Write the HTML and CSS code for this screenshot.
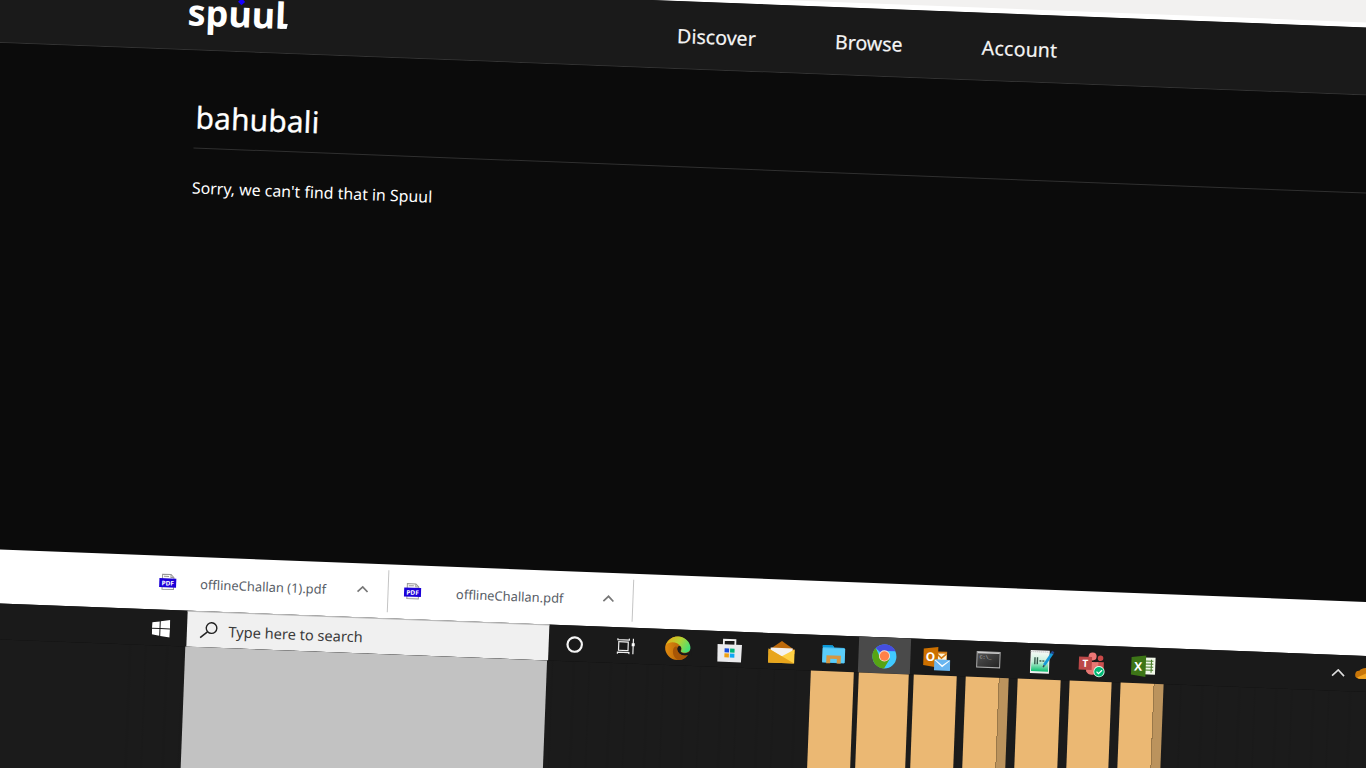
FILE: index.html
```
<!DOCTYPE html>
<html lang="en">
<head>
<meta charset="utf-8">
<title>Spuul</title>
<link rel="stylesheet" href="styles.css">
</head>
<body>
<div class="screen">
  <div class="browser-edge"></div>
  <header class="header">
    <div class="logo">spuul<span class="logo-dot"></span><span class="logo-foot"></span></div>
    <nav class="nav"><a class="discover">Discover</a><a class="browse">Browse</a><a class="account">Account</a></nav>
  </header>
  <main class="content">
    <h1 class="title">bahubali</h1>
    <p class="message">Sorry, we can't find that in Spuul</p>
  </main>
  <section class="downloads">
    <div class="download">
      <svg class="pdf" viewBox="0 0 18 18"><path d="M3.500 7V1.500H12L15 4.500V16.500H3.500Z" fill="#f8f8f8" stroke="#999"/><path d="M12 1.500V4.500H15M5 3.500H10" fill="none" stroke="#999"/><rect x=".5" y="5.500" width="17" height="9" fill="#1b00d8"/><text x="9" y="12.600" text-anchor="middle" class="pdf-text">PDF</text></svg>
      <span class="file">offlineChallan (1).pdf</span>
      <svg class="caret" viewBox="0 0 12 8"><path d="M1 6.500L6 1.500L11 6.500" fill="none" stroke="#777" stroke-width="1.700"/></svg>
    </div>
    <div class="download second">
      <svg class="pdf" viewBox="0 0 18 18"><path d="M3.500 7V1.500H12L15 4.500V16.500H3.500Z" fill="#f8f8f8" stroke="#999"/><path d="M12 1.500V4.500H15M5 3.500H10" fill="none" stroke="#999"/><rect x=".5" y="5.500" width="17" height="9" fill="#1b00d8"/><text x="9" y="12.600" text-anchor="middle" class="pdf-text">PDF</text></svg>
      <span class="file">offlineChallan.pdf</span>
      <svg class="caret" viewBox="0 0 12 8"><path d="M1 6.500L6 1.500L11 6.500" fill="none" stroke="#777" stroke-width="1.700"/></svg>
    </div>
  </section>
  <section class="taskbar">
    <div class="start"><svg class="win" viewBox="0 0 18 18"><path d="M0 3L7.500 1.800V8.500H0ZM8.500 1.600L18 0V8.500H8.500ZM0 9.500H7.500V16.200L0 15ZM8.500 9.500H18V17.500L8.500 16.300Z" fill="#fff"/></svg></div>
    <div class="search"><svg class="lens" viewBox="0 0 20 20"><circle cx="12.500" cy="7.500" r="5.300" fill="none" stroke="#222" stroke-width="1.400"/><path d="M8.500 11.500L1.500 17.500" stroke="#222" stroke-width="1.500"/></svg><span>Type here to search</span></div>
    <div class="apps">
      <div class="app"><svg viewBox="0 0 28 28"><circle cx="14" cy="14" r="7.200" fill="none" stroke="#f4f4f4" stroke-width="2.200"/></svg></div>
      <div class="app"><svg viewBox="0 0 28 28"><g fill="none" stroke="#eee" stroke-width="1.200"><rect x="6" y="9.500" width="9.500" height="8.500"/><path d="M5 6V7.500H16.500V6M5 21.500V20H16.500V21.500M20.500 6V21.500"/></g><rect x="19" y="10.500" width="3" height="3" fill="#fff"/></svg></div>
      <div class="app"><svg viewBox="0 0 28 28"><defs><linearGradient id="edge-a" x1="0" x2="1" y1=".2" y2=".6"><stop stop-color="#e8aa18"/><stop offset=".5" stop-color="#b5d332"/><stop offset="1" stop-color="#45e076"/></linearGradient><linearGradient id="edge-b" x1="0" x2="1"><stop stop-color="#e28b0e"/><stop offset="1" stop-color="#9b4e08"/></linearGradient></defs><path d="M1.500 13A12.500 12.500 0 0 1 14 2A12 12 0 0 1 22 23Q18.500 25.800 14 25.500A12.500 12.500 0 0 1 1.500 13Z" fill="url(#edge-b)"/><path d="M2 11C5 4 10 1.500 15 2C22 2.500 26.800 8 26.800 13C26.800 17.500 22 19 17.500 17.300C17.800 15.500 18.500 14.500 17 12C13.500 7 6 6.500 2 11Z" fill="url(#edge-a)"/><path d="M17.300 12.500C18.500 15 16.500 16 17.500 17.300C20 19 24 19 28 15V20.500L24.500 20C21 22 17.500 20.500 15.800 19C13.500 17 13 14 14 12.500C15 11.200 16.500 11.300 17.300 12.500Z" fill="#1a1a1a"/><path d="M14 12.500C13 14 13.500 17 15.800 19C18.500 21 21.500 21.300 24.300 20C22 24 18.500 25.800 14.500 25.400C10 23 8.500 18 10 14C11 12 12.500 11.500 14 12.500Z" fill="#a75606"/></svg></div>
      <div class="app"><svg viewBox="0 0 28 28"><path d="M8 9V3.500H19.500V9" fill="none" stroke="#eee" stroke-width="1.800"/><path d="M1.800 8H26.200L25.800 25.500H2.200Z" fill="#eaeaec"/><path d="M9 12H13.500V16H9Z" fill="#174ddc"/><path d="M14.500 12H19V16H14.500Z" fill="#00b67a"/><path d="M9 17H13.500V21H9Z" fill="#f0a010"/><path d="M14.500 17H19V21H14.500Z" fill="#10a8f4"/></svg></div>
      <div class="app"><svg viewBox="0 0 28 28"><path d="M1 12L14 2.500L27 11V15H1Z" fill="#bd6a0b"/><path d="M3 9.500H25V18H3Z" fill="#f5f2f0"/><path d="M1 10.500L14 18L27 10.500V24.500H1Z" fill="#ffd044"/><path d="M1 10.500L27 24.500H1Z" fill="#e8a51c"/></svg></div>
      <div class="app"><svg viewBox="0 0 28 28"><path d="M3 5H13L14.500 7H25V22.500H3Z" fill="#43b8ee"/><path d="M3 5H13L14.500 7H3Z" fill="#0798d8"/><path d="M3 8H25.500V22H3Z" fill="#5bcdf9"/><path d="M7 23V15H21.500V23H17.500V18.500H11V23Z" fill="#d69742"/></svg></div>
      <div class="app active"><svg viewBox="0 0 28 28"><circle cx="14" cy="14" r="12" fill="#40c9ff"/><path d="M14 14L5 6A12 11.500 0 0 1 25 8.500H14Z" fill="#454ee0"/><path d="M5 6A12 12 0 0 0 14 26L19.500 16L14 14L9 14Z" fill="#57a414"/><circle cx="14" cy="13.500" r="5.600" fill="#f7ddd2"/><circle cx="14" cy="13.500" r="4.700" fill="#ff8148"/></svg></div>
      <div class="app"><svg class="office" viewBox="0 0 28 28"><path d="M14 5H24.500V18H14Z" fill="#d27b12"/><path d="M14 7H24V14H14Z" fill="#fff4d8"/><path d="M14 7L19 11.500L24 7" fill="none" stroke="#d27b12" stroke-width="1.500"/><path d="M1 2.500L15.500 .5V21L1 19Z" fill="#cc7000"/><text x="8" y="14.800" text-anchor="middle" class="office-letter">O</text><path d="M12 13.500H28V24H12Z" fill="#68b5f0"/><path d="M12 13.500H28L20 20.500Z" fill="#fff"/><path d="M12.500 13H27.500L20 18.500Z" fill="#68b5f0"/></svg></div>
      <div class="app"><svg viewBox="0 0 28 28"><defs><linearGradient id="term" x1="0" x2="1" y2="1"><stop stop-color="#555"/><stop offset="1" stop-color="#222"/></linearGradient></defs><rect x="2.500" y="5.500" width="23" height="15.500" fill="url(#term)" stroke="#aaa"/><path d="M3 6.500H25" stroke="#ccc" stroke-width="1.500"/><text x="5" y="12.500" class="terminal-text">C:\_</text></svg></div>
      <div class="app"><svg viewBox="0 0 28 28"><defs><linearGradient id="note" x2="0" y2="1"><stop stop-color="#f4faf6"/><stop offset=".5" stop-color="#c4efd9"/><stop offset="1" stop-color="#0cc070"/></linearGradient></defs><path d="M4 2H23V25H4Z" fill="#eee"/><path d="M5 4H22V23H5Z" fill="url(#note)"/><path d="M4 3.500H23" stroke="#bbb" stroke-dasharray="1 1"/><path d="M8.500 9V16M11 9V16M13 12.500H15M16 12.500H18" stroke="#34584a" stroke-width="1.400"/><path d="M25.500 4.500L18 16.500" stroke="#159ad9" stroke-width="2.800"/><path d="M26.500 2.500L25.200 4.800" stroke="#23468b" stroke-width="2.800"/><path d="M18 16.500L17 18.500" stroke="#345" stroke-width="1.500"/></svg></div>
      <div class="app"><svg viewBox="0 0 28 28"><circle cx="15" cy="6" r="4" fill="#ed7776"/><circle cx="23" cy="7.500" r="2.800" fill="#ca4948"/><path d="M19 11.500H26.500V18C26.500 21 24 22.500 19 22Z" fill="#cb5050"/><path d="M9 11.500H21V19C20 24.500 12 26.500 9 21Z" fill="#e77773"/><path d="M1.500 6.500H14.500V19.500H1.500Z" fill="#bc4848"/><text x="8" y="16.800" text-anchor="middle" class="teams-letter">T</text><circle cx="22" cy="21" r="5.600" fill="#dfffee"/><circle cx="22" cy="21" r="4.800" fill="#00b773"/><path d="M19.500 21L21.500 23L25 19.500" fill="none" stroke="#fff" stroke-width="1.300"/></svg></div>
      <div class="app"><svg viewBox="0 0 28 28"><path d="M14 5H26V22H14Z" fill="#f1f8e9"/><path d="M22 7V20M15 8.500H24M15 11.500H24M15 14.500H24M15 17.500H24" stroke="#447b24" stroke-width="1"/><path d="M2 5L16.500 3V24.500L2 22.500Z" fill="#3d7517"/><text x="9" y="18.500" text-anchor="middle" class="office-letter">X</text></svg></div>
    </div>
    <div class="tray"><svg class="tray-caret" viewBox="0 0 14 8"><path d="M1 7L7 1L13 7" fill="none" stroke="#ddd" stroke-width="1.600"/></svg><svg class="cloud" viewBox="0 0 24 12"><path d="M4 11A4 4 0 0 1 4 3A8 7 0 0 1 17 3A5 5 0 0 1 20 11Z" fill="#c87508"/><path d="M2 10L12 5L22 10L18 11H4Z" fill="#f2a421"/></svg></div>
  </section>
  <section class="lower">
    <div class="lower-search"></div>
    <div class="bars">
      <i class="bar"></i><i class="bar wide"></i><i class="bar"></i><i class="bar split"></i><i class="bar"></i><i class="bar"></i><i class="bar split"></i>
    </div>
  </section>
</div>
</body>
</html>
```
FILE: styles.css
```
* { box-sizing: border-box; }
html, body { margin: 0; width: 100%; height: 100%; overflow: hidden; background: #0b0b0b; }
body { font-family: "Noto Sans", "Open Sans", sans-serif; }
.screen { display: flex; flex-direction: column; width: 1440px; height: 860px; margin: -60px 0 0; transform: rotate(2.2deg); transform-origin: 0 60px; }
/* Carries the bands past the left edge of the rotated surface. */
.screen > * { flex-shrink: 0; margin-left: -10px; padding-left: 10px; }
.browser-edge { height: 35px; background: #f2f1f0; border-bottom: 5px solid #fff; }
.header { display: flex; height: 68px; background: #1a1a1a; border-bottom: 1px solid #343434; }
.logo { position: relative; margin: 5px 0 0 188px; width: 490px; height: 50px; line-height: 50px; font-size: 36px; font-weight: 700; color: #fff; }
.logo-dot { position: absolute; left: 51px; top: 10px; width: 5px; height: 5px; background: #1500ff; transform: rotate(45deg); }
.logo-foot { position: absolute; left: 93px; top: 33px; width: 7px; height: 5px; background: #fff; transform: skewX(-12deg); }
.nav { display: flex; align-items: center; padding-top: 1px; font-size: 19.600px; font-weight: 400; color: #f4f4f4; -webkit-text-stroke: .2px #f4f4f4; }
.discover { width: 158px; }
.browse { width: 147px; }
.account { letter-spacing: .15px; }
.content { height: 505.500px; background: #0b0b0b; }
.title { margin: 0 0 0 199px; padding: 47px 0 9.500px 1px; line-height: 40px; font-size: 30px; font-weight: 400; letter-spacing: .1px; color: #fff; -webkit-text-stroke: .3px #fff; border-bottom: 1px solid #303030; }
.message { margin: 27.500px 0 0 199px; line-height: 24px; font-size: 15.900px; color: #fff; }
.downloads { display: flex; height: 54px; background: #fff; }
.download { display: flex; align-items: center; width: 245px; height: 42px; margin-top: 6px; border-right: 1px solid #c4c4c4; }
.download:first-child { margin-left: 166px; }
.pdf { width: 18px; height: 18px; margin: 0 0 2px 14.500px; }
.pdf-text { font: 700 6.500px "Open Sans", sans-serif; fill: #fff; }
.file { width: 127px; margin-left: 24px; font-size: 12.900px; line-height: 20px; color: #575d66; white-space: nowrap; }
.second .file { width: 117px; margin-left: 35px; }
.caret { width: 12px; height: 8px; margin: 0 0 1px 29px; }
.taskbar { display: flex; height: 36.500px; background: #1a1a1a; }
.start { display: flex; width: 210.500px; align-items: center; justify-content: flex-end; padding: 2px 16.500px 0 0; }
.win { width: 18px; height: 18px; }
.search { display: flex; align-items: center; width: 362.400px; padding-left: 12px; background: #f0f0f0; border-top: 1px solid #b9b9b9; font-size: 14.600px; color: #3b3b3b; }
.search span { padding-top: .500px; }
.lens { width: 20px; height: 20px; margin: 1px 10px 0 0; }
.apps { display: grid; grid-template-columns: repeat(12, 51.760px); }
.app { display: flex; align-items: center; justify-content: center; }
.app svg { width: 28px; height: 28px; margin-top: 1.500px; }
.app .office { margin-top: 6px; }
.active { background: #4a4a4a; }
.office-letter { font: 700 12px "Open Sans", sans-serif; fill: #fff; }
.teams-letter { font: 700 10px "Open Sans", sans-serif; fill: #fff; }
.terminal-text { font: 5px "Liberation Mono", monospace; fill: #bbb; }
.tray { display: flex; align-items: center; margin-left: 162.500px; }
.tray-caret { width: 14px; height: 8px; }
.cloud { width: 24px; height: 12px; margin: 1px 0 0 10px; }
.lower { display: flex; height: 160px; background: repeating-linear-gradient(90deg, transparent 0 13px, #18181855 14px 16px, transparent 17px 29px, #18181866 30px 31px, transparent 32px 37px) 150px 0 no-repeat, #1b1b1b; }
.lower-search { width: 362.400px; margin-left: 209.500px; background: #c2c2c2; }
.bars { display: grid; grid-template-columns: repeat(7, 51.760px); margin-left: 259px; }
.bar { margin: 0 4px 0 5px; background: #ebb873; }
.wide { margin: 0 0 0 1px; }
.split { background: linear-gradient(90deg, #ebb873 0 33px, #9a7849 33px 34px, #bb935d 34px); }
```
